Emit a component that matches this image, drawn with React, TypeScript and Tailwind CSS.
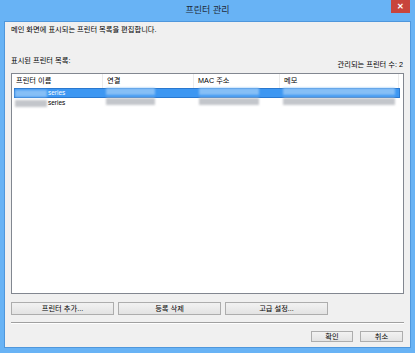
import React from "react";

// Blurred placeholder blocks stand in for the redacted printer details.
function Blur({ w, tone }: { w: string; tone: "sel" | "gray" }) {
  return (
    <span
      className={
        "inline-block h-[7px] blur-[1px] " +
        w +
        (tone === "sel" ? " bg-[#86bff6]" : " bg-[#c3c6cb]")
      }
    />
  );
}

function Row({ selected }: { selected?: boolean }) {
  const tone = selected ? "sel" : "gray";
  return (
    <div
      className={
        "ml-[2px] mr-[3px] flex h-[10px] items-center " +
        (selected ? "border border-[#2a78cf] bg-[#3d97f2] text-white" : "border border-transparent text-black")
      }
    >
      <div className="flex w-[89px] items-center">
        <Blur w="w-[32px]" tone={tone} />
        <span className="ml-[1px] text-[6.5px] leading-[8px]">series</span>
      </div>
      <div className="w-[91px] pl-[2px]">
        <Blur w="w-[49px]" tone={tone} />
      </div>
      <div className="w-[86px] pl-[4px]">
        <Blur w="w-[60px]" tone={tone} />
      </div>
      <div className="flex-1 pl-[2px] pr-[4px]">
        <Blur w="w-full" tone={tone} />
      </div>
    </div>
  );
}

function Btn({ label, w }: { label: string; w: string }) {
  return (
    <button
      type="button"
      className={
        "flex items-center justify-center border border-[#adadad] bg-gradient-to-b from-[#f2f2f2] to-[#e3e3e3] leading-none text-black " +
        w
      }
    >
      {label}
    </button>
  );
}

export default function App() {
  return (
    <div className="flex h-[353px] w-[415px] flex-col bg-[#68b3f5] font-['Liberation_Sans','Noto_Sans_CJK_KR',sans-serif] text-[7.25px] text-black">
      {/* Title bar */}
      <div className="relative flex h-[21px] items-center justify-center">
        <span className="text-[9px] leading-none text-[#1e2a38]">프린터 관리</span>
        <div className="absolute right-[5px] top-0 flex h-[13px] w-[19px] items-center justify-center bg-[#c8443b] text-[8px] font-bold leading-none text-white">
          ✕
        </div>
      </div>

      {/* Client area */}
      <div className="mx-[4px] mb-[5px] flex flex-1 flex-col border border-[#4f97dc] bg-[#f0f0f0] px-[6px]">
        <div className="mt-[4px] h-[8px] leading-[8px]">메인 화면에 표시되는 프린터 목록을 편집합니다.</div>

        <div className="mt-[23px] flex h-[16px] items-start justify-between pr-[1px]">
          <span className="leading-[8px]">표시된 프린터 목록:</span>
          <span className="mt-[4px] leading-[8px]">관리되는 프린터 수: 2</span>
        </div>

        <div className="h-[221px] border border-[#828790] bg-white">
          <div className="flex h-[14px] items-center">
            <div className="h-full w-[91px] border-r border-[#ececec] pl-[4px] leading-[14px]">프린터 이름</div>
            <div className="h-full w-[91px] border-r border-[#ececec] pl-[4px] leading-[14px]">연결</div>
            <div className="h-full w-[86px] border-r border-[#ececec] pl-[4px] leading-[14px]">MAC 주소</div>
            <div className="h-full w-[119px] border-r border-[#ececec] pl-[4px] leading-[14px]">메모</div>
          </div>
          <Row selected />
          <Row />
        </div>

        <div className="mt-[8px] flex h-[13px] gap-[4px]">
          <Btn label="프린터 추가..." w="w-[103px]" />
          <Btn label="등록 삭제" w="w-[103px]" />
          <Btn label="고급 설정..." w="w-[103px]" />
        </div>

        <div className="mt-[7px] border-t border-[#a0a0a0] border-b border-b-white" />

        <div className="mt-[7px] flex h-[11px] justify-end gap-[7px] pr-[1px]">
          <Btn label="확인" w="w-[42px]" />
          <Btn label="취소" w="w-[43px]" />
        </div>
      </div>
    </div>
  );
}
